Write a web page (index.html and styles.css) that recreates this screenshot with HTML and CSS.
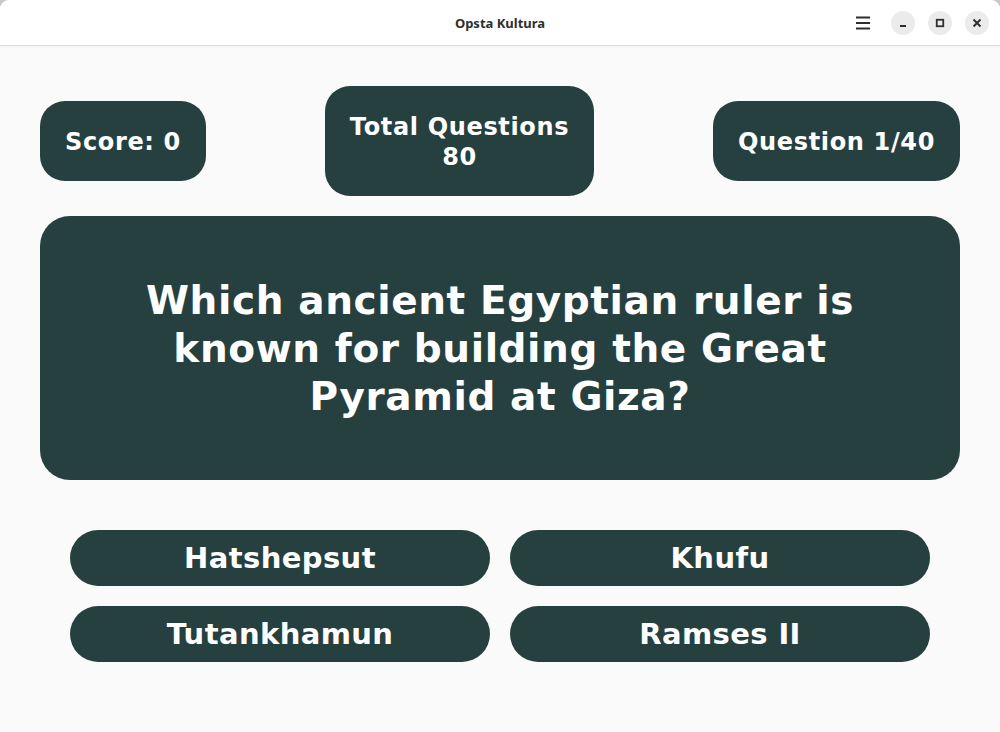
FILE: index.html
```html
<!DOCTYPE html>
<html>
<head>
<meta charset="utf-8">
<link rel="stylesheet" href="styles.css">
</head>
<body>
<div class="window">
  <header class="headerbar">
    <div class="title">Opsta Kultura</div>
    <div class="controls">
      <button class="menu-btn" aria-label="Menu">
        <svg width="16" height="16" viewBox="0 0 16 16"><path d="M1 2.5h14M1 8h14M1 13.5h14" stroke="#2e2e2e" stroke-width="2" fill="none"/></svg>
      </button>
      <button class="wbtn" aria-label="Minimize">
        <svg width="10" height="10" viewBox="0 0 10 10"><rect x="2" y="7" width="6" height="2" fill="#2e2e2e"/></svg>
      </button>
      <button class="wbtn" aria-label="Maximize">
        <svg width="10" height="10" viewBox="0 0 10 10"><rect x="1.75" y="1.75" width="6.5" height="6.5" fill="none" stroke="#2e2e2e" stroke-width="1.8"/></svg>
      </button>
      <button class="wbtn" aria-label="Close">
        <svg width="10" height="10" viewBox="0 0 10 10"><path d="M1.5 1.5l7 7M8.5 1.5l-7 7" stroke="#2e2e2e" stroke-width="1.9" fill="none"/></svg>
      </button>
    </div>
  </header>
  <main class="content">
    <div class="stats">
      <div class="pill">Score: 0</div>
      <div class="pill">Total Questions<br>80</div>
      <div class="pill">Question 1/40</div>
    </div>
    <div class="question">Which ancient Egyptian ruler is known for building the Great Pyramid at Giza?</div>
    <div class="answers">
      <button class="answer">Hatshepsut</button>
      <button class="answer">Khufu</button>
      <button class="answer">Tutankhamun</button>
      <button class="answer">Ramses II</button>
    </div>
  </main>
</div>
</body>
</html>
```
FILE: styles.css
```css
html, body {
  margin: 0;
  padding: 0;
  background: #c8c8c8;
}
body {
  width: 1000px;
  height: 732px;
  overflow: hidden;
  font-family: "DejaVu Sans", sans-serif;
}
.window {
  width: 1000px;
  height: 732px;
  background: #fafafa;
  border-radius: 9px 9px 0 0;
  overflow: hidden;
  display: flex;
  flex-direction: column;
}
.headerbar {
  height: 45px;
  background: #ffffff;
  border-bottom: 1px solid #dedede;
  box-shadow: 0 1px 2px rgba(0,0,0,0.04);
  display: flex;
  align-items: center;
  justify-content: center;
  position: relative;
  flex: none;
}
.title {
  font-family: "Noto Sans", sans-serif;
  font-weight: 700;
  font-size: 13px;
  color: #2e2e2e;
}
.controls {
  position: absolute;
  right: 11px;
  top: 11px;
  display: flex;
  align-items: center;
  gap: 13px;
}
.controls button {
  border: none;
  padding: 0;
  margin: 0;
  display: flex;
  align-items: center;
  justify-content: center;
  cursor: default;
}
.menu-btn {
  width: 24px;
  height: 24px;
  background: transparent;
  margin-left: 1px !important;
  margin-right: 3px !important;
}
.wbtn {
  width: 24px;
  height: 24px;
  border-radius: 50%;
  background: #ebebeb;
}
.content {
  flex: 1;
  padding: 40px 40px 0 40px;
  display: flex;
  flex-direction: column;
}
.stats {
  display: flex;
  justify-content: space-between;
  align-items: center;
}
.pill {
  background: #264040;
  color: #ffffff;
  font-weight: 700;
  font-size: 24px;
  line-height: 30px;
  padding: 26px 25px 24px 25px;
  border-radius: 25px;
  text-align: center;
  letter-spacing: 0.65px;
}
.question {
  margin-top: 20px;
  background: #264040;
  color: #ffffff;
  border-radius: 30px;
  padding: 61px 70px 59px 70px;
  font-weight: 700;
  font-size: 39px;
  line-height: 48px;
  text-align: center;
  letter-spacing: 0.6px;
}
.answers {
  margin: 50px 30px 0 30px;
  display: grid;
  grid-template-columns: 1fr 1fr;
  gap: 20px;
}
.answer {
  height: 56px;
  border: none;
  border-radius: 28px;
  background: #264040;
  color: #ffffff;
  font-family: "DejaVu Sans", sans-serif;
  font-weight: 700;
  font-size: 29px;
  letter-spacing: 0.4px;
  padding: 0;
}
```
